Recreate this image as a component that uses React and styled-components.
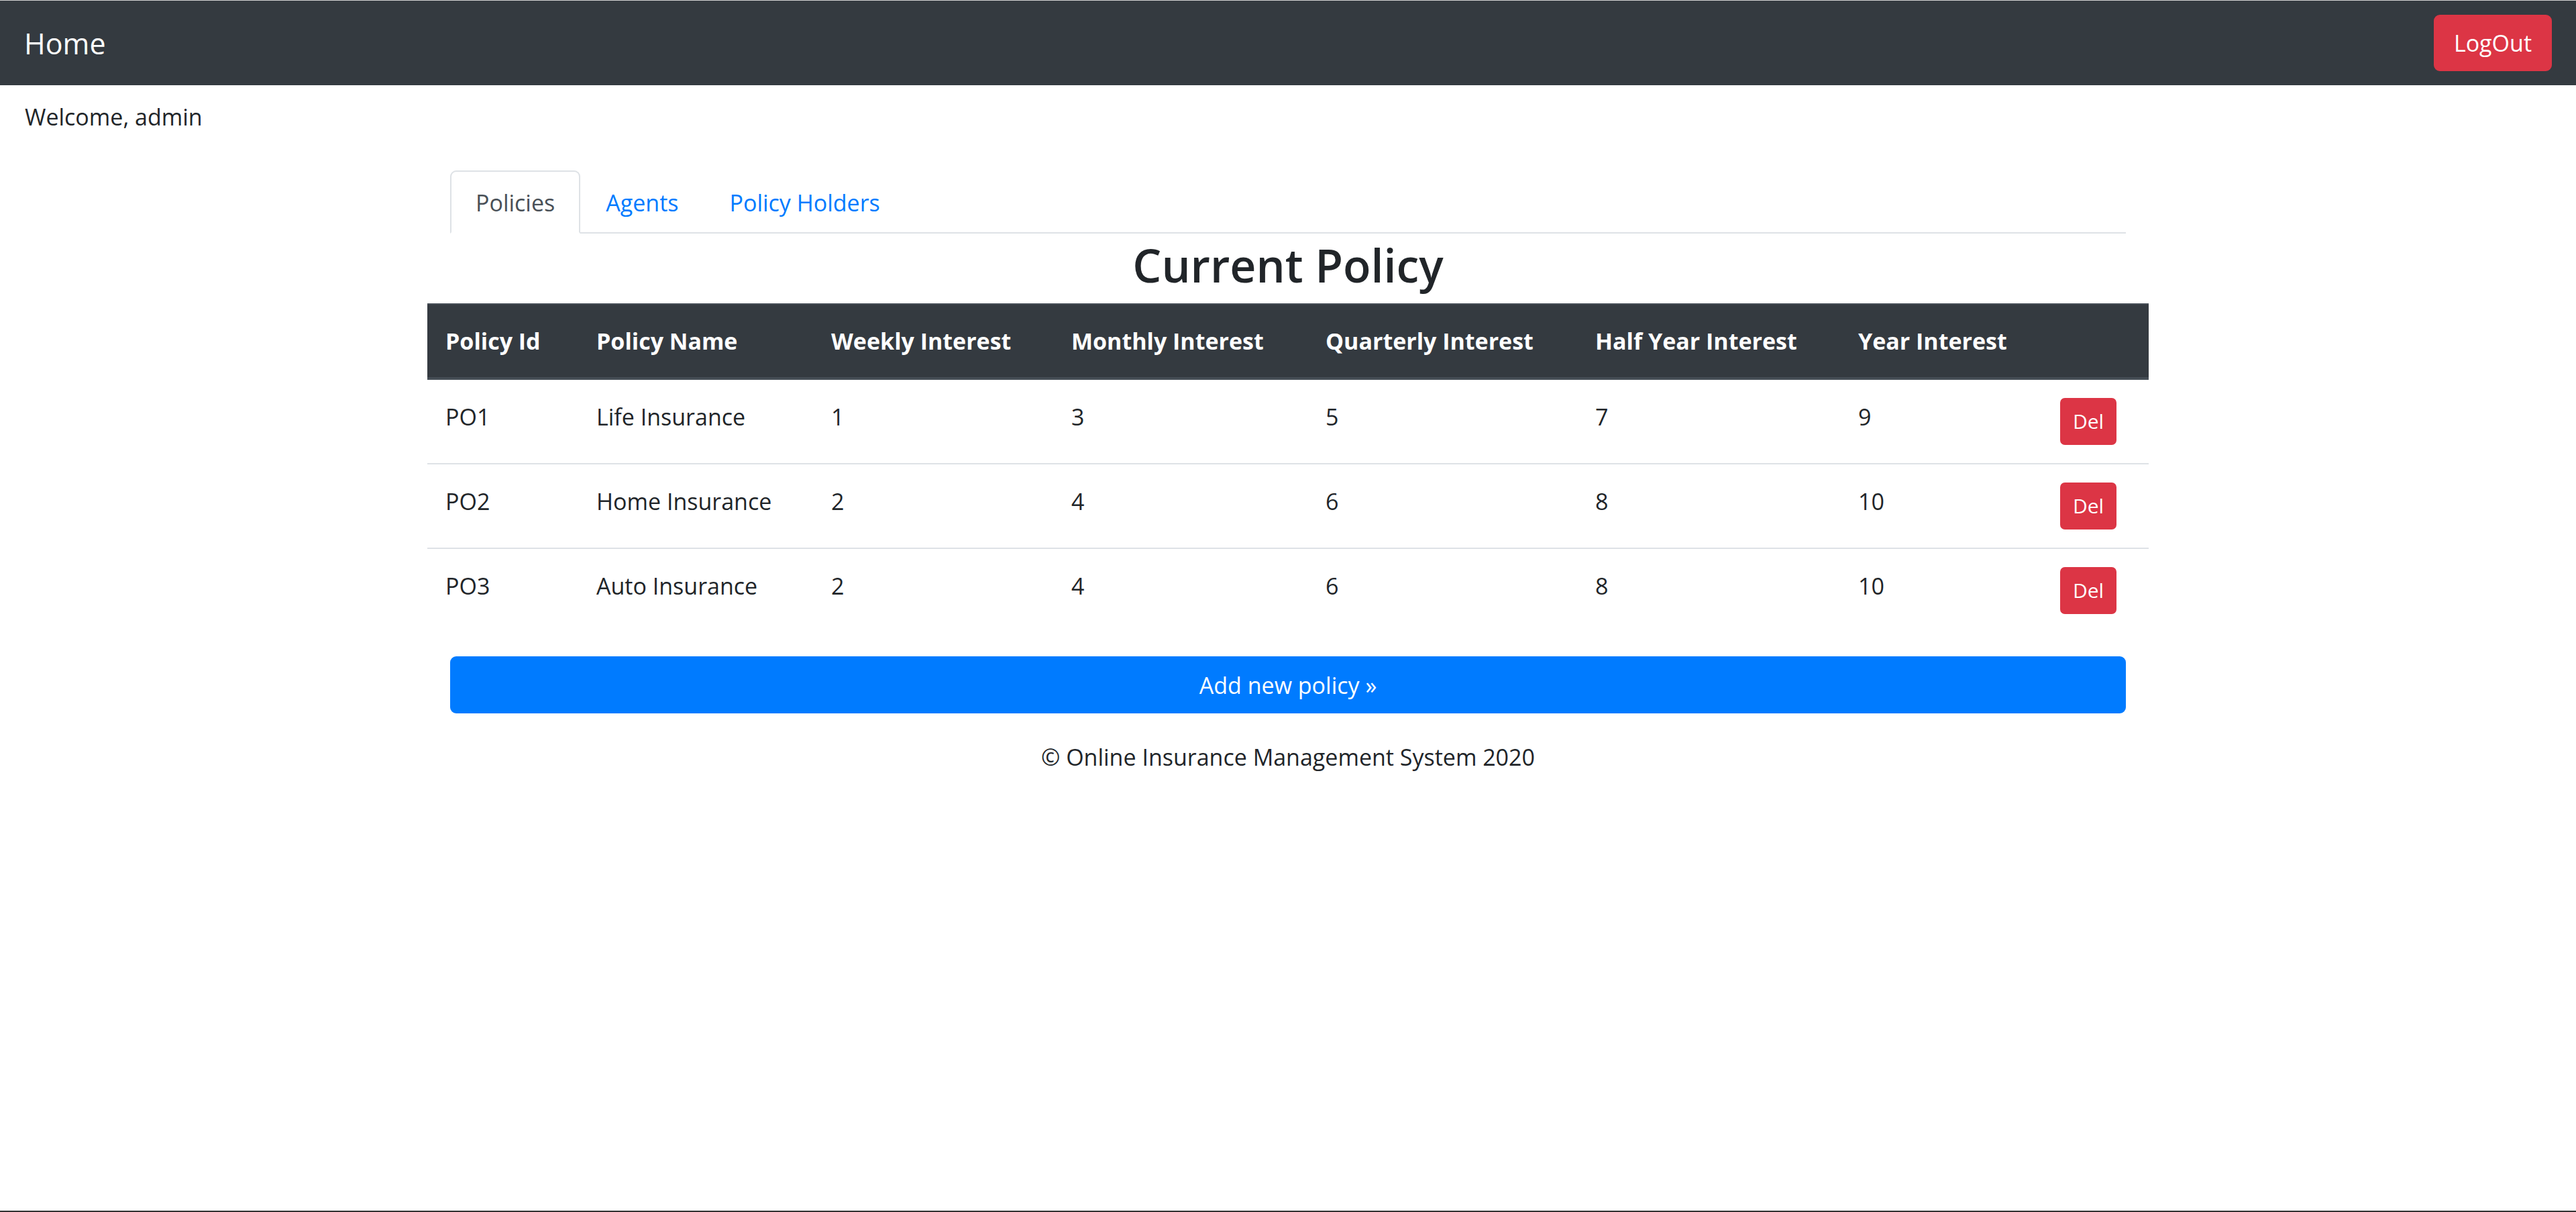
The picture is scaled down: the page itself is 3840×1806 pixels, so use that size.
import React from 'react';
import styled, { createGlobalStyle } from 'styled-components';

const policies = [
  { id: 'PO1', name: 'Life Insurance', weekly: 1, monthly: 3, quarterly: 5, half: 7, year: 9 },
  { id: 'PO2', name: 'Home Insurance', weekly: 2, monthly: 4, quarterly: 6, half: 8, year: 10 },
  { id: 'PO3', name: 'Auto Insurance', weekly: 2, monthly: 4, quarterly: 6, half: 8, year: 10 },
];

// column widths measured from the screenshot (page is at ~225% zoom)
const columns = [
  { label: 'Policy Id', width: 225 },
  { label: 'Policy Name', width: 350 },
  { label: 'Weekly Interest', width: 358 },
  { label: 'Monthly Interest', width: 379 },
  { label: 'Quarterly Interest', width: 402 },
  { label: 'Half Year Interest', width: 392 },
  { label: 'Year Interest', width: 301 },
  { label: '', width: 159 },
];

const tabs = ['Policies', 'Agents', 'Policy Holders'];

const App = () => {
  return (
    <Page>
      <GlobalStyle />
      <NavBar>
        <Brand href="#">Home</Brand>
        <LogOutButton type="button">LogOut</LogOutButton>
      </NavBar>
      <Welcome>Welcome, admin</Welcome>
      <Container>
        <Inner>
          <TabList>
            {tabs.map((tab, i) => (
              <Tab key={tab} $active={i === 0}>{tab}</Tab>
            ))}
          </TabList>
        </Inner>
        <Heading>Current Policy</Heading>
        <Table>
          <colgroup>
            {columns.map((col, i) => (
              <Col key={i} $width={col.width} />
            ))}
          </colgroup>
          <thead>
            <tr>
              {columns.map((col, i) => (
                <Th key={i}>{col.label}</Th>
              ))}
            </tr>
          </thead>
          <tbody>
            {policies.map((p) => (
              <tr key={p.id}>
                <Td>{p.id}</Td>
                <Td>{p.name}</Td>
                <Td>{p.weekly}</Td>
                <Td>{p.monthly}</Td>
                <Td>{p.quarterly}</Td>
                <Td>{p.half}</Td>
                <Td>{p.year}</Td>
                <Td>
                  <DelButton type="button">Del</DelButton>
                </Td>
              </tr>
            ))}
          </tbody>
        </Table>
        <Inner>
          <AddButton type="button">Add new policy »</AddButton>
          <Footer>© Online Insurance Management System 2020</Footer>
        </Inner>
      </Container>
    </Page>
  );
};

export default App;

const GlobalStyle = createGlobalStyle`
  * {
    box-sizing: border-box;
  }
  body {
    margin: 0;
    background: #fff;
    color: #212529;
    font-family: "Open Sans", "Noto Sans", sans-serif;
    font-size: 34px;
    line-height: 54px;
  }
`;

const Page = styled.div`
  min-height: 100vh;
  border-top: 1px solid #d4d4d4;
  border-bottom: 2px solid #333;
`;

const NavBar = styled.nav`
  display: flex;
  align-items: center;
  justify-content: space-between;
  height: 126px;
  padding: 18px 36px;
  background: #343a40;
`;

const Brand = styled.a`
  color: #fff;
  font-size: 43px;
  line-height: 67px;
  padding: 11px 0;
  text-decoration: none;
`;

const LogOutButton = styled.button`
  font-family: inherit;
  font-size: 34px;
  line-height: 54px;
  padding: 13px 28px;
  color: #fff;
  background: #dc3545;
  border: 2px solid #dc3545;
  border-radius: 9px;
  cursor: pointer;
`;

const Welcome = styled.div`
  margin-top: 20px;
  padding-left: 37px;
`;

const Container = styled.div`
  width: 2566px;
  margin: 53px auto 0;
`;

const Inner = styled.div`
  padding: 0 34px;
`;

const TabList = styled.div`
  display: flex;
  border-bottom: 2px solid #dee2e6;
`;

const Tab = styled.a`
  display: block;
  margin-bottom: -2px;
  padding: 19px 36px 17px;
  border: 2px solid transparent;
  border-radius: 9px 9px 0 0;
  color: ${(p) => (p.$active ? '#495057' : '#007bff')};
  cursor: pointer;
  ${(p) => p.$active && 'background: #fff; border-color: #dee2e6 #dee2e6 #fff;'}
`;

const Heading = styled.h2`
  margin: 0 0 14px;
  padding-top: 4px;
  text-align: center;
  font-size: 68px;
  font-weight: 600;
  line-height: 86px;
`;

const Table = styled.table`
  width: 100%;
  table-layout: fixed;
  border-collapse: collapse;
  margin-bottom: 36px;
`;

const Col = styled.col`
  width: ${(p) => p.$width}px;
`;

const Th = styled.th`
  padding: 27px;
  text-align: left;
  vertical-align: bottom;
  font-weight: 700;
  color: #fff;
  background: #343a40;
  border-top: 2px solid #454d55;
  border-bottom: 4px solid #454d55;
  white-space: nowrap;
`;

const Td = styled.td`
  padding: 28px 27px 27px;
  vertical-align: top;
  border-top: 2px solid #dee2e6;
  tr:first-child > & {
    border-top: none;
  }
`;

const DelButton = styled.button`
  display: block;
  margin-top: -1px;
  font-family: inherit;
  font-size: 30px;
  line-height: 48px;
  padding: 9px 17px;
  color: #fff;
  background: #dc3545;
  border: 2px solid #dc3545;
  border-radius: 7px;
  cursor: pointer;
`;

const AddButton = styled.button`
  display: block;
  width: 100%;
  font-family: inherit;
  font-size: 34px;
  line-height: 54px;
  padding: 14px 27px 13px;
  color: #fff;
  background: #007bff;
  border: 2px solid #007bff;
  border-radius: 9px;
  cursor: pointer;
`;

const Footer = styled.p`
  margin: 38px 0 0;
  text-align: center;
`;
